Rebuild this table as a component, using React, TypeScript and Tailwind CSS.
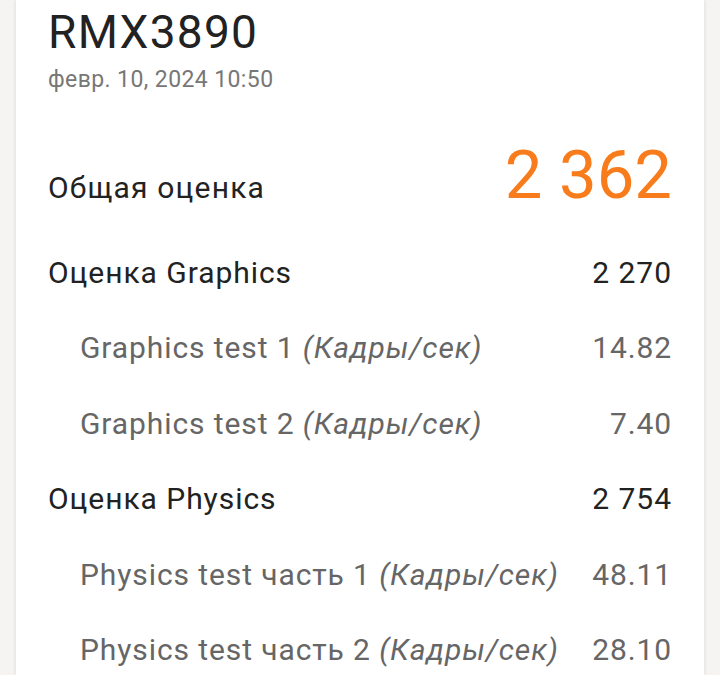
import React from "react";

const font = { fontFamily: "Roboto, 'Noto Sans', sans-serif" };

function MainRow({ label, value }: { label: string; value: string }) {
  return (
    <div className="flex items-baseline justify-between h-[75.4px] leading-[75.4px] text-[30px] tracking-[0.95px] text-[#222222]">
      <span>{label}</span>
      <span>{value}</span>
    </div>
  );
}

function SubRow({ label, value }: { label: string; value: string }) {
  return (
    <div className="flex items-baseline justify-between h-[75.4px] leading-[75.4px] text-[30px] tracking-[0.9px] text-[#666666] pl-[32px]">
      <span>
        {label} <i>(Кадры/сек)</i>
      </span>
      <span>{value}</span>
    </div>
  );
}

export default function App() {
  return (
    <div className="w-[720px] h-[675px] overflow-hidden bg-[#f5f4f3] flex" style={font}>
      <div className="ml-[16px] w-[688px] h-full bg-white shadow-[0_0_4px_rgba(0,0,0,0.12)] px-[32px] flex flex-col">
        <div className="mt-[9px] text-[46px] leading-[46px] tracking-[1.3px] text-[#222222]">RMX3890</div>
        <div className="mt-[13px] text-[23px] leading-[23px] tracking-[0.4px] text-[#777777]">февр. 10, 2024 10:50</div>
        <div className="mt-[49px] flex items-baseline justify-between h-[70px]">
          <span className="text-[30px] tracking-[1.2px] text-[#222222]">Общая оценка</span>
          <span className="text-[67px] leading-[70px] text-[#f87b1c]">2 362</span>
        </div>
        <div className="mt-[25px]">
          <MainRow label="Оценка Graphics" value="2 270" />
          <SubRow label="Graphics test 1" value="14.82" />
          <SubRow label="Graphics test 2" value="7.40" />
          <MainRow label="Оценка Physics" value="2 754" />
          <SubRow label="Physics test часть 1" value="48.11" />
          <SubRow label="Physics test часть 2" value="28.10" />
        </div>
      </div>
    </div>
  );
}
